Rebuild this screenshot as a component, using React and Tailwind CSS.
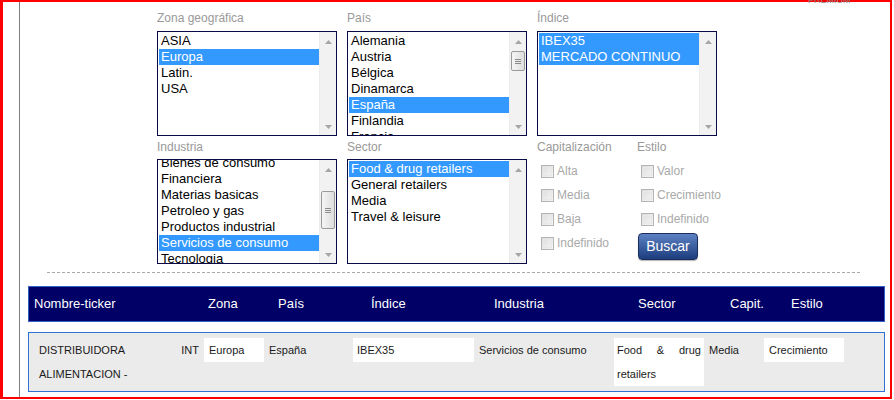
import React from 'react';

const ArrowUp = () => (
  <svg width="7" height="4" viewBox="0 0 7 4" className="block">
    <path d="M0 4 L3.5 0 L7 4 Z" fill="#a6a6a6" />
  </svg>
);

const ArrowDown = () => (
  <svg width="7" height="4" viewBox="0 0 7 4" className="block">
    <path d="M0 0 L3.5 4 L7 0 Z" fill="#a6a6a6" />
  </svg>
);

// fake windows-style listbox
const Listbox = ({ items, selected = [], offset = 'mt-0', thumb = null }) => (
  <div className="flex h-[105px] w-[180px] border border-[#0a0a46] bg-white">
    <div className="flex-1 overflow-hidden pl-px pt-px">
      <div className={offset}>
        {items.map((it) => (
          <div
            key={it}
            className={`h-[16px] whitespace-nowrap pl-[2px] text-[13px] leading-[16px] ${
              selected.includes(it) ? 'bg-[#3399ff] text-white' : 'text-black'
            }`}
          >
            {it}
          </div>
        ))}
      </div>
    </div>
    <div className="relative flex w-[17px] flex-col items-center justify-between border-l border-[#ececec] bg-[#f2f2f2] pb-[6px] pt-[8px]">
      <ArrowUp />
      {thumb && (
        <div
          className={`absolute left-[1px] right-[1px] flex items-center justify-center rounded-[2px] border border-[#9a9a9a] bg-gradient-to-r from-[#f4f4f4] to-[#dedede] ${thumb}`}
        >
          <div className="flex flex-col gap-[1px]">
            <div className="h-px w-[6px] bg-[#8a8a8a]" />
            <div className="h-px w-[6px] bg-[#8a8a8a]" />
            <div className="h-px w-[6px] bg-[#8a8a8a]" />
          </div>
        </div>
      )}
      <ArrowDown />
    </div>
  </div>
);

const Label = ({ children, className = '' }) => (
  <div className={`text-[12px] leading-[14px] text-[#999999] ${className}`}>{children}</div>
);

const Check = ({ label }) => (
  <div className="flex h-[24px] items-center gap-[3px] pl-[4px] text-[12px] text-[#a9a9a9]">
    <div className="h-[13px] w-[13px] border border-[#b4b4b4] bg-gradient-to-br from-[#dcdcdc] to-[#f6f6f6] p-px">
      <div className="h-full w-full border border-[#e8e8e8]" />
    </div>
    <span>{label}</span>
  </div>
);

export default function App() {
  return (
    <div className="relative h-[400px] w-[894px] overflow-hidden bg-white font-['Liberation_Sans',Arial,sans-serif]">
      <div className="flex h-[399px] w-[892px] border-b-2 border-l-[3px] border-r-2 border-t-2 border-[#ff0000]">
        <div className="w-[16px]" />
        <div className="w-px bg-[#7f7f7f]" />
        <div className="flex flex-1 flex-col">
          {/* filtros */}
          <div className="pl-[137px] pt-[9px]">
            <div className="flex gap-[10px]">
              <div>
                <Label className="mb-[6px]">Zona geográfica</Label>
                <Listbox items={['ASIA', 'Europa', 'Latin.', 'USA']} selected={['Europa']} />
              </div>
              <div>
                <Label className="mb-[6px]">País</Label>
                <Listbox
                  items={['Alemania', 'Austria', 'Bélgica', 'Dinamarca', 'España', 'Finlandia', 'Francia']}
                  selected={['España']}
                  thumb="top-[19px] h-[20px]"
                />
              </div>
              <div>
                <Label className="mb-[6px]">Índice</Label>
                <Listbox items={['IBEX35', 'MERCADO CONTINUO']} selected={['IBEX35', 'MERCADO CONTINUO']} />
              </div>
            </div>
            <div className="mt-[4px] flex gap-[10px]">
              <div>
                <Label className="mb-[5px]">Industria</Label>
                <Listbox
                  items={[
                    'Bienes de consumo',
                    'Financiera',
                    'Materias basicas',
                    'Petroleo y gas',
                    'Productos industrial',
                    'Servicios de consumo',
                    'Tecnologia',
                  ]}
                  selected={['Servicios de consumo']}
                  offset="-mt-[6px]"
                  thumb="top-[31px] h-[38px]"
                />
              </div>
              <div>
                <Label className="mb-[5px]">Sector</Label>
                <Listbox
                  items={['Food & drug retailers', 'General retailers', 'Media', 'Travel & leisure']}
                  selected={['Food & drug retailers']}
                />
              </div>
              <div className="flex">
                <div className="w-[100px]">
                  <Label className="mb-[5px]">Capitalización</Label>
                  <Check label="Alta" />
                  <Check label="Media" />
                  <Check label="Baja" />
                  <Check label="Indefinido" />
                </div>
                <div>
                  <Label className="mb-[5px]">Estilo</Label>
                  <Check label="Valor" />
                  <Check label="Crecimiento" />
                  <Check label="Indefinido" />
                  <button className="ml-px mt-[2px] h-[27px] w-[60px] rounded-[4px] border border-[#1a2d5c] bg-gradient-to-b from-[#5d82c4] to-[#1d3d7d] text-[14px] text-white shadow-[0_1px_1px_rgba(0,0,0,0.3)]">
                    Buscar
                  </button>
                </div>
              </div>
            </div>
          </div>

          <div className="ml-[27px] mr-[28px] mt-[8px] h-px bg-[repeating-linear-gradient(90deg,#aaaaaa_0_3px,transparent_3px_5px)]" />

          {/* resultados */}
          <div className="ml-[8px] mr-[5px] mt-[13px]">
            <div className="flex h-[36px] items-center border border-[#2f62c8] bg-[#000066] pl-[5px] text-[13px] text-white">
              <span className="w-[174px]">Nombre-ticker</span>
              <span className="w-[70px]">Zona</span>
              <span className="w-[93px]">País</span>
              <span className="w-[123px]">Índice</span>
              <span className="w-[144px]">Industria</span>
              <span className="w-[92px]">Sector</span>
              <span className="w-[61px]">Capit.</span>
              <span>Estilo</span>
            </div>
            <div className="mt-[10px] flex items-start border border-[#2f72d2] bg-[#ebebeb] p-[5px] text-[11px] leading-[24px] text-[#1a1a1a]">
              <div className="w-[170px] px-[5px] text-justify">DISTRIBUIDORA INT ALIMENTACION -</div>
              <div className="w-[60px] bg-white px-[5px]">Europa</div>
              <div className="w-[89px] px-[5px]">España</div>
              <div className="w-[121px] bg-white px-[4px]">IBEX35</div>
              <div className="w-[140px] px-[5px]">Servicios de consumo</div>
              <div className="w-[90px] bg-white px-[3px] text-justify">Food &amp; drug retailers</div>
              <div className="w-[60px] px-[5px]">Media</div>
              <div className="w-[80px] bg-white px-[5px]">Crecimiento</div>
            </div>
          </div>
        </div>
      </div>
      <span className="absolute left-[808px] top-[-5px] text-[9px] leading-[10px] text-[#8a8a8a]">PREMIUM</span>
    </div>
  );
}
